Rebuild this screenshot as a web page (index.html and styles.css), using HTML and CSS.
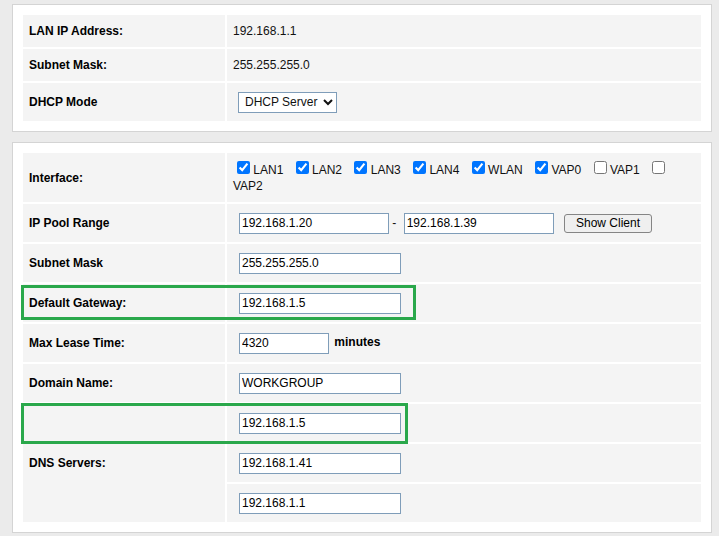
FILE: index.html
```html
<!DOCTYPE html>
<html>
<head>
<meta charset="utf-8">
<link rel="stylesheet" href="styles.css">
</head>
<body>
<div class="panel">
  <table class="grid">
    <tr class="h32"><td class="lbl">LAN IP Address:</td><td class="val">192.168.1.1</td></tr>
    <tr class="h32"><td class="lbl">Subnet Mask:</td><td class="val">255.255.255.0</td></tr>
    <tr class="h38"><td class="lbl">DHCP Mode</td><td class="val"><select class="sel"><option>DHCP Server</option></select></td></tr>
  </table>
</div>
<div class="panel panel2">
  <table class="grid">
    <tr class="h49"><td class="lbl">Interface:</td><td class="val ifaces"><input type="checkbox" class="cb first" checked> LAN1 <input type="checkbox" class="cb" checked> LAN2 <input type="checkbox" class="cb" checked> LAN3 <input type="checkbox" class="cb" checked> LAN4 <input type="checkbox" class="cb" checked> WLAN <input type="checkbox" class="cb" checked> VAP0 <input type="checkbox" class="cb"> VAP1 <input type="checkbox" class="cb"> VAP2</td></tr>
    <tr class="h38"><td class="lbl">IP Pool Range</td><td class="val"><input class="in w150" value="192.168.1.20"> - <input class="in w150 second" value="192.168.1.39"> <button class="btn">Show Client</button></td></tr>
    <tr class="h38"><td class="lbl">Subnet Mask</td><td class="val"><input class="in w162" value="255.255.255.0"></td></tr>
    <tr class="h38"><td class="lbl">Default Gateway:</td><td class="val"><input class="in w162" value="192.168.1.5"></td></tr>
    <tr class="h38"><td class="lbl">Max Lease Time:</td><td class="val"><input class="in w90" value="4320"> <span class="unit">minutes</span></td></tr>
    <tr class="h38"><td class="lbl">Domain Name:</td><td class="val"><input class="in w162" value="WORKGROUP"></td></tr>
    <tr class="h38"><td class="lbl" rowspan="3">DNS Servers:</td><td class="val"><input class="in w162" value="192.168.1.5"></td></tr>
    <tr class="h38"><td class="val"><input class="in w162" value="192.168.1.41"></td></tr>
    <tr class="h38"><td class="val"><input class="in w162" value="192.168.1.1"></td></tr>
  </table>
  <div class="mark mark1"></div>
  <div class="mark mark2"></div>
</div>
</body>
</html>
```
FILE: styles.css
```css
html, body {
  margin: 0;
  background: #ebebeb;
}
body {
  padding: 4px 0 0 12px;
  font-family: "Liberation Sans", Arial, sans-serif;
  font-size: 12px;
  color: #111;
}
.panel {
  width: 700px;
  box-sizing: border-box;
  background: #fff;
  border: 1px solid #d4d4d4;
  padding: 8px;
}
.panel2 {
  margin-top: 10px;
  position: relative;
}
.grid {
  width: 100%;
  border-spacing: 2px;
  border-collapse: separate;
}
.grid td {
  background: #f4f4f4;
  padding: 0 6px;
  vertical-align: middle;
}
.h32 td { height: 32px; }
.h38 td { height: 38px; }
.h49 td { height: 49px; }
.lbl {
  width: 190px;
  font-weight: bold;
  color: #000;
}
.val {
  color: #111;
}
.ifaces {
  line-height: 16px;
}
.cb {
  width: 13px;
  height: 13px;
  margin: 0 0 0 9px;
  vertical-align: baseline;
}
.cb.first {
  margin-left: 4px;
}
.sel {
  width: 99px;
  height: 21px;
  margin-left: 5px;
  font-family: "Liberation Sans", Arial, sans-serif;
  font-size: 12px;
  color: #111;
  background: #fff;
  border: 1px solid #7f9db9;
  border-radius: 0;
  padding: 0 0 0 2px;
  vertical-align: middle;
}
.in {
  box-sizing: border-box;
  height: 21px;
  margin-left: 6px;
  padding: 1px 2px;
  border: 1px solid #7f9db9;
  font-family: "Liberation Sans", Arial, sans-serif;
  font-size: 12px;
  color: #000;
  background: #fff;
  vertical-align: middle;
}
.in.second { margin-left: 4px; }
.w150 { width: 150px; }
.w162 { width: 162px; }
.w90 { width: 90px; }
.btn {
  box-sizing: border-box;
  width: 88px;
  height: 19px;
  margin-left: 7px;
  padding: 0;
  font-family: "Liberation Sans", Arial, sans-serif;
  font-size: 12px;
  color: #000;
  background: #efefef;
  border: 1px solid #858585;
  border-radius: 3px;
  vertical-align: middle;
}
.unit {
  font-weight: bold;
  color: #000;
  margin-left: 2px;
}
.mark {
  position: absolute;
  box-sizing: border-box;
  border: 3px solid #2aa84b;
  pointer-events: none;
}
.mark1 {
  left: 8px;
  top: 142px;
  width: 395px;
  height: 35px;
}
.mark2 {
  left: 8px;
  top: 260px;
  width: 387px;
  height: 41px;
}
```
